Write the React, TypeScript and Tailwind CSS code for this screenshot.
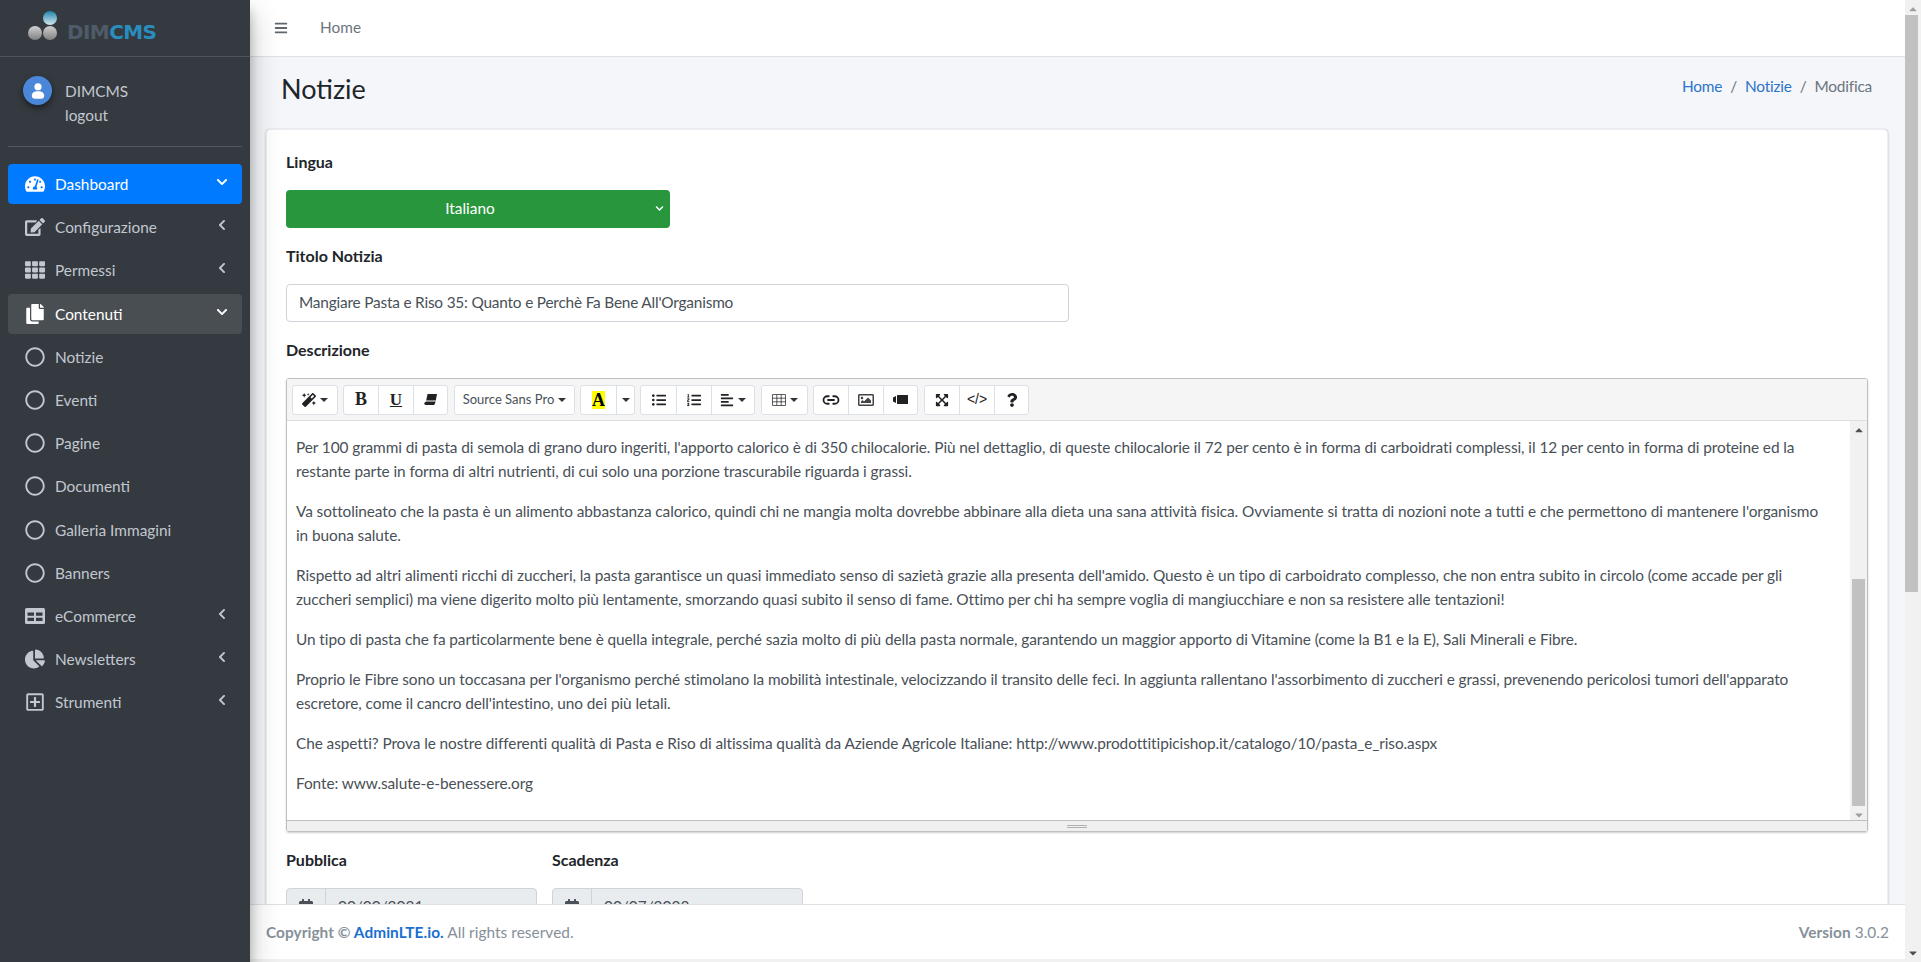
import React from "react";
import {
  FaChevronDown,
  FaChevronLeft,
  FaTachometerAlt,
  FaEdit,
  FaTh,
  FaCopy,
  FaRegCircle,
  FaChartPie,
  FaRegPlusSquare,
  FaBars,
  FaMagic,
  FaListUl,
  FaListOl,
  FaAlignLeft,
  FaRegImage,
  FaExpandArrowsAlt,
  FaQuestion,
  FaCalendarAlt,
  FaCaretDown,
  FaCaretUp,
} from "react-icons/fa";
import { Link2 } from "lucide-react";

const TableBlock = ({ className }: { className?: string }) => (
  <svg viewBox="0 0 20 16" className={className} fill="currentColor">
    <path fillRule="evenodd" d="M1.5 0h17A1.5 1.5 0 0 1 20 1.500v13a1.500 1.500 0 0 1-1.500 1.500h-17A1.500 1.500 0 0 1 0 14.500v-13A1.500 1.500 0 0 1 1.500 0zM2.500 4.500v3.200h6.500V4.500zm8.500 0v3.200h6.500V4.500zM2.500 9.700v3.300h6.500V9.700zm8.500 0v3.300h6.500V9.700z" />
  </svg>
);

const GridIcon = () => (
  <svg viewBox="0 0 14 12" className="w-[14px] h-3" fill="none" stroke="#333" strokeWidth="0.8">
    <path d="M.5.5h13v11H.5zM.5 4.200h13M.5 7.800h13M4.800.5v11M9.200.5v11" />
  </svg>
);

const VideoIcon = () => (
  <svg viewBox="0 0 15 9" className="w-[15px] h-[9px]" fill="#222">
    <rect x="4" y="0" width="11" height="9" rx="0.5" />
    <path d="M0 2.500L3 1v7L0 6.500z" />
  </svg>
);

const EraserIcon = () => (
  <svg viewBox="0 0 13 11" className="w-[13px] h-[11px]" fill="#222">
    <path d="M3.500 0H13l-1.200 6.500H2.200z" />
    <path d="M2 7.500h9.600L11 9.500c-.2.800-.8 1.500-1.700 1.500H2C.8 11 0 10.200.3 9z" />
  </svg>
);

const Caret = ({ className = "ml-1" }: { className?: string }) => (
  <span className={`inline-block w-0 h-0 border-x-[4px] border-x-transparent border-t-[4px] border-t-[#333] ${className}`} />
);

const navTop = [
  { label: "Dashboard", icon: <FaTachometerAlt />, open: true, active: true },
  { label: "Configurazione", icon: <FaEdit /> },
  { label: "Permessi", icon: <FaTh /> },
  { label: "Contenuti", icon: <FaCopy />, open: true, section: true },
];

const subItems = ["Notizie", "Eventi", "Pagine", "Documenti", "Galleria Immagini", "Banners"];

const navBottom = [
  { label: "eCommerce", icon: <TableBlock className="w-5 h-4" /> },
  { label: "Newsletters", icon: <FaChartPie /> },
  { label: "Strumenti", icon: <FaRegPlusSquare /> },
];

type NavRowProps = { label: string; icon: React.ReactNode; open?: boolean; active?: boolean; section?: boolean; leaf?: boolean };

const NavRow = ({ label, icon, open, active, section, leaf }: NavRowProps) => (
  <div
    className={`h-10 mb-[3.2px] rounded flex items-center pl-[17px] pr-[14px] ${
      active ? "bg-[#007bff] text-white" : section ? "bg-[#494e53] text-white" : "text-[#c2c7d0]"
    }`}
  >
    <span className="w-[20px] flex justify-center text-[20px]">{icon}</span>
    <span className="ml-[10px] flex-1 leading-6">{label}</span>
    {!leaf && <span className="text-[12px] -mt-1">{open ? <FaChevronDown /> : <FaChevronLeft />}</span>}
  </div>
);

const ToolBtn = ({ children, className = "w-[35px]" }: { children: React.ReactNode; className?: string }) => (
  <div className={`h-[28px] flex items-center justify-center border-r border-[#dae0e5] last:border-r-0 text-[#222] text-[14px] ${className}`}>
    {children}
  </div>
);

const ToolGroup = ({ children, className = "ml-[5px]" }: { children: React.ReactNode; className?: string }) => (
  <div className={`flex bg-white border border-[#dae0e5] rounded-[3px] h-[30px] items-center ${className}`}>{children}</div>
);

const paragraphs: string[][] = [
  [
    "Per 100 grammi di pasta di semola di grano duro ingeriti, l'apporto calorico è di 350 chilocalorie. Più nel dettaglio, di queste chilocalorie il 72 per cento è in forma di carboidrati complessi, il 12 per cento in forma di proteine ed la",
    "restante parte in forma di altri nutrienti, di cui solo una porzione trascurabile riguarda i grassi.",
  ],
  [
    "Va sottolineato che la pasta è un alimento abbastanza calorico, quindi chi ne mangia molta dovrebbe abbinare alla dieta una sana attività fisica. Ovviamente si tratta di nozioni note a tutti e che permettono di mantenere l'organismo",
    "in buona salute.",
  ],
  [
    "Rispetto ad altri alimenti ricchi di zuccheri, la pasta garantisce un quasi immediato senso di sazietà grazie alla presenta dell'amido. Questo è un tipo di carboidrato complesso, che non entra subito in circolo (come accade per gli",
    "zuccheri semplici) ma viene digerito molto più lentamente, smorzando quasi subito il senso di fame. Ottimo per chi ha sempre voglia di mangiucchiare e non sa resistere alle tentazioni!",
  ],
  [
    "Un tipo di pasta che fa particolarmente bene è quella integrale, perché sazia molto di più della pasta normale, garantendo un maggior apporto di Vitamine (come la B1 e la E), Sali Minerali e Fibre.",
  ],
  [
    "Proprio le Fibre sono un toccasana per l'organismo perché stimolano la mobilità intestinale, velocizzando il transito delle feci. In aggiunta rallentano l'assorbimento di zuccheri e grassi, prevenendo pericolosi tumori dell'apparato",
    "escretore, come il cancro dell'intestino, uno dei più letali.",
  ],
  [
    "Che aspetti? Prova le nostre differenti qualità di Pasta e Riso di altissima qualità da Aziende Agricole Italiane: http://www.prodottitipicishop.it/catalogo/10/pasta_e_riso.aspx",
  ],
  ["Fonte: www.salute-e-benessere.org"],
];

const FieldLabel = ({ children, className = "" }: { children: React.ReactNode; className?: string }) => (
  <div className={`text-[16px] font-bold text-[#212529] leading-6 mb-4 ${className}`}>{children}</div>
);

const DateField = ({ label, value }: { label: string; value: string }) => (
  <div className="w-[251px] shrink-0">
    <FieldLabel>{label}</FieldLabel>
    <div className="flex h-[38px] border border-[#ced4da] rounded bg-[#e9ecef]">
      <div className="w-[39px] border-r border-[#ced4da] flex items-center justify-center text-[#495057] text-[16px]">
        <FaCalendarAlt />
      </div>
      <div className="pl-3 pt-[6px] text-[#495057]">{value}</div>
    </div>
  </div>
);

export default function App() {
  return (
    <div className="flex h-[962px] w-full overflow-hidden bg-[#f1f1f1] text-[15.4px] font-['Lato','Noto_Sans',sans-serif]">
      {/* sidebar */}
      <aside className="w-[250px] shrink-0 bg-[#343a40] shadow-[0_14px_28px_rgba(0,0,0,0.25),0_10px_10px_rgba(0,0,0,0.22)] z-10">
        <div className="h-[57px] border-b border-[#4b545c] flex items-center pl-[27px]">
          <svg viewBox="0 0 34 32" className="w-[34px] h-8 -mt-1">
            <defs>
              <linearGradient id="ball" x1="0" y1="0" x2="0" y2="1">
                <stop offset="0" stopColor="#1f84ad" />
                <stop offset="1" stopColor="#d7e9ee" />
              </linearGradient>
              <linearGradient id="grey" x1="0" y1="0" x2="0" y2="1">
                <stop offset="0" stopColor="#d0d0d0" />
                <stop offset="1" stopColor="#808080" />
              </linearGradient>
            </defs>
            <circle cx="23" cy="8" r="7" fill="url(#ball)" />
            <circle cx="8" cy="23" r="7" fill="url(#grey)" />
            <circle cx="23" cy="23" r="7" fill="url(#grey)" />
          </svg>
          <span className="ml-[6px] mt-[8px] text-[20px] leading-none font-bold tracking-[-0.6px] font-['DejaVu_Sans',sans-serif]">
            <span className="text-[#4f5b68]">DIM</span>
            <span className="text-[#2a8dbd]">CMS</span>
          </span>
        </div>
        <div className="mx-2 h-[90px] border-b border-[#4f5962] flex pl-[15px] pt-[19px]">
          <div className="w-[29px] h-[29px] rounded-full bg-[#4a87d8] shadow-[0_3px_6px_rgba(0,0,0,0.5)] flex items-center justify-center shrink-0">
            <svg viewBox="0 0 16 16" className="w-[18px] h-[18px]" fill="#fff">
              <circle cx="8" cy="4.200" r="3.200" />
              <path d="M2.500 12.500c0-3 2.200-4.200 5.500-4.200s5.500 1.200 5.500 4.200c0 1.500-1.200 2.300-2.500 2.300H5c-1.300 0-2.500-.8-2.500-2.300z" />
            </svg>
          </div>
          <div className="ml-[13px] mt-[3px] text-[#c2c7d0] leading-6">
            <div>DIMCMS</div>
            <div>logout</div>
          </div>
        </div>
        <nav className="px-2 pt-[17px]">
          {navTop.map((n) => (
            <NavRow key={n.label} {...n} />
          ))}
          {subItems.map((s) => (
            <NavRow key={s} label={s} icon={<FaRegCircle />} leaf />
          ))}
          {navBottom.map((n) => (
            <NavRow key={n.label} {...n} />
          ))}
        </nav>
      </aside>

      {/* main column */}
      <div className="flex-1 min-w-0 flex flex-col h-[959px] bg-[#f4f6f9]">
        <header className="h-[57px] shrink-0 bg-white border-b border-[#dee2e6] flex items-center pl-[24px] text-[#6c757d]">
          <FaBars className="text-[14px] text-[#5f666c]" />
          <span className="ml-[32px]">Home</span>
        </header>
        <main className="flex-1 min-h-0 overflow-hidden pl-4 pr-[17px]">
          <div className="h-[72px] flex items-start justify-between pt-[15px] pl-[15px] pr-4">
            <h1 className="text-[27px] leading-[34px] text-[#212529]">Notizie</h1>
            <div className="flex text-[#6c757d] pt-[2px] leading-6 tracking-[-0.2px]">
              <span className="text-[#2f74c8]">Home</span>
              <span className="px-2">/</span>
              <span className="text-[#2f74c8]">Notizie</span>
              <span className="px-2">/</span>
              <span>Modifica</span>
            </div>
          </div>
          <section className="bg-white rounded border border-[#eceef1] shadow-[0_0_1px_rgba(0,0,0,0.13),0_1px_3px_rgba(0,0,0,0.2)] px-[19px] pt-[20px] h-[820px]">
            <FieldLabel>Lingua</FieldLabel>
            <div className="w-[384px] h-[38px] rounded bg-[#28963c] text-white flex items-center relative">
              <span className="w-full text-center pr-[16px]">Italiano</span>
              <FaChevronDown className="absolute right-[6px] top-[14px] text-[9px]" />
            </div>
            <FieldLabel className="mt-4">Titolo Notizia</FieldLabel>
            <div className="w-[783px] h-[38px] rounded border border-[#ced4da] flex items-center px-3 text-[#495057] tracking-[-0.2px]">
              Mangiare Pasta e Riso 35: Quanto e Perchè Fa Bene All'Organismo
            </div>
            <FieldLabel className="mt-4">Descrizione</FieldLabel>

            {/* editor */}
            <div className="h-[454px] w-full rounded-[3px] border border-[#bfbfbf] shadow-[0_1px_2px_rgba(0,0,0,0.2)] flex flex-col overflow-hidden">
              <div className="h-[42px] shrink-0 bg-[#f5f5f5] border-b border-[#dedede] flex items-center pl-[5px]">
                <ToolGroup className="ml-0"><ToolBtn className="w-[44px]"><FaMagic className="text-[14px]" /><Caret /></ToolBtn></ToolGroup>
                <ToolGroup>
                  <ToolBtn><span className="font-['Liberation_Serif',serif] font-bold text-[18px]">B</span></ToolBtn>
                  <ToolBtn><span className="font-['Liberation_Serif',serif] font-bold text-[17px] underline">U</span></ToolBtn>
                  <ToolBtn className="w-[33px]"><EraserIcon /></ToolBtn>
                </ToolGroup>
                <ToolGroup className="ml-[6px]">
                  <ToolBtn className="w-[119px]"><span className="text-[13px] text-[#495057]">Source Sans Pro</span><Caret /></ToolBtn>
                </ToolGroup>
                <ToolGroup>
                  <ToolBtn className="w-[36px]"><span className="bg-[#ffff00] w-[13px] h-[18px] flex items-center justify-center font-['Liberation_Serif',serif] font-bold text-[18px] leading-none text-black">A</span></ToolBtn>
                  <ToolBtn className="w-[17px]"><Caret className="" /></ToolBtn>
                </ToolGroup>
                <ToolGroup>
                  <ToolBtn className="w-[36px]"><FaListUl /></ToolBtn>
                  <ToolBtn><FaListOl /></ToolBtn>
                  <ToolBtn className="w-[42px]"><FaAlignLeft /><Caret /></ToolBtn>
                </ToolGroup>
                <ToolGroup className="ml-[6px]">
                  <ToolBtn className="w-[45px]"><GridIcon /><Caret /></ToolBtn>
                </ToolGroup>
                <ToolGroup>
                  <ToolBtn><Link2 size={18} strokeWidth={2.4} /></ToolBtn>
                  <ToolBtn><FaRegImage className="text-[16px] text-[#444]" /></ToolBtn>
                  <ToolBtn className="w-[33px]"><VideoIcon /></ToolBtn>
                </ToolGroup>
                <ToolGroup className="ml-[6px]">
                  <ToolBtn><FaExpandArrowsAlt /></ToolBtn>
                  <ToolBtn><span className="text-[14px] font-['Liberation_Sans',sans-serif]">&lt;/&gt;</span></ToolBtn>
                  <ToolBtn className="w-[33px]"><FaQuestion className="text-[14px]" /></ToolBtn>
                </ToolGroup>
              </div>
              <div className="flex-1 min-h-0 flex bg-white">
                <div className="flex-1 min-w-0 pl-[9px] pt-[14px] text-[#495057] whitespace-nowrap overflow-hidden tracking-[-0.085px]">
                  {paragraphs.map((p, i) => (
                    <p key={i} className="mb-4 leading-6">
                      {p.map((line, j) => (
                        <span key={j} className="block">{line}</span>
                      ))}
                    </p>
                  ))}
                </div>
                <div className="w-[17px] shrink-0 bg-[#f1f1f1] flex flex-col items-center text-[#505050]">
                  <FaCaretUp className="text-[12px] mt-[3px] shrink-0" />
                  <div className="w-[13px] h-[227px] bg-[#c1c1c1] mt-[143px] shrink-0" />
                  <FaCaretDown className="text-[12px] mt-[3px] shrink-0 text-[#a0a0a0]" />
                </div>
              </div>
              <div className="h-[11px] shrink-0 bg-[#f0f0f0] border-t border-[#bfbfbf] flex flex-col items-center justify-center gap-[1px]">
                <div className="w-5 h-px bg-[#b0b0b0]" />
                <div className="w-5 h-px bg-[#b0b0b0]" />
              </div>
            </div>

            <div className="flex gap-[15px] mt-[16px]">
              <DateField label="Pubblica" value="00/00/2021" />
              <DateField label="Scadenza" value="00/07/2023" />
            </div>
          </section>
        </main>
        <footer className="h-[55px] shrink-0 bg-white border-t border-[#dee2e6] flex items-center justify-between pl-[16px] pr-[16px] pt-[2px] text-[#869099] tracking-[0.05px]">
          <div>
            <b className="font-bold">Copyright © </b>
            <b className="font-bold text-[#1a6fd1]">AdminLTE.io.</b> All rights reserved.
          </div>
          <div><b className="font-bold">Version</b> 3.0.2</div>
        </footer>
      </div>

      {/* page scrollbar */}
      <div className="w-4 shrink-0 bg-[#f1f1f1] flex flex-col items-start h-[962px] text-[#a0a0a0]">
        <FaCaretUp className="text-[12px] mt-[3px] ml-[2px] shrink-0" />
        <div className="w-[13px] h-[577px] bg-[#c1c1c1] shrink-0" />
        <div className="flex-1" />
        <FaCaretDown className="text-[12px] mb-[3px] ml-[2px] shrink-0 text-[#505050]" />
      </div>
    </div>
  );
}
